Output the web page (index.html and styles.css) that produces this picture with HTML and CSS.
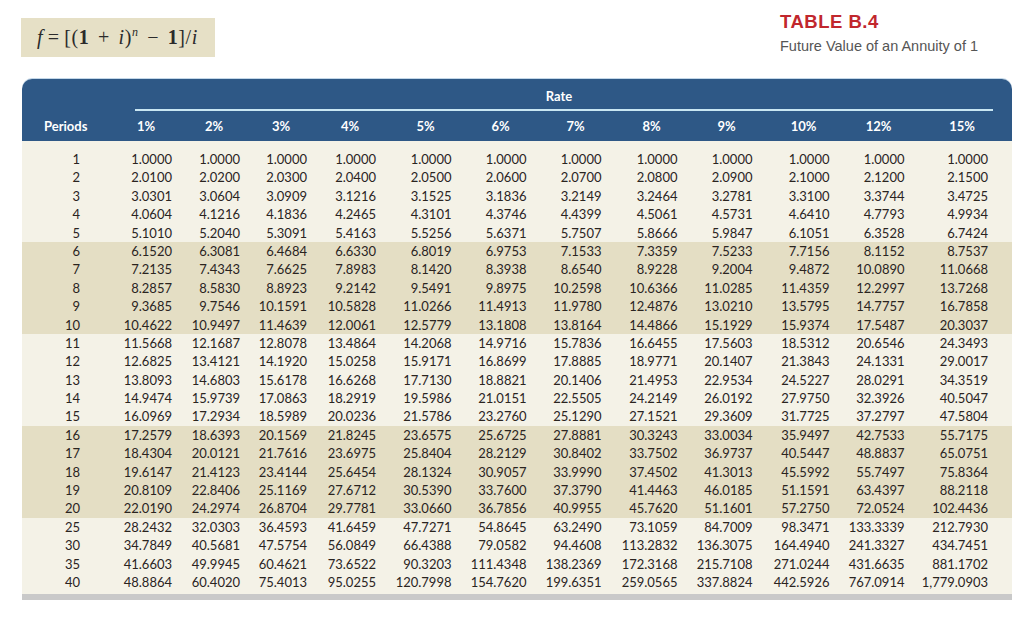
FILE: index.html
```html
<!DOCTYPE html>
<html lang="en">
<head>
<meta charset="utf-8">
<title>Table B.4 Future Value of an Annuity of 1</title>
<link rel="stylesheet" href="styles.css">
</head>
<body>
<div class="page">
  <div class="top">
    <div class="formula"><i>f</i>&#8201;=&#8201;[(<b>1</b> + <i>i</i>)<sup><i>n</i></sup> − <b>1</b>]/<i>i</i></div>
    <div class="title">
      <div class="title-main">TABLE B.4</div>
      <div class="title-sub">Future Value of an Annuity of 1</div>
    </div>
  </div>

  <div class="table">
    <div class="thead">
      <div class="rate-band"><span class="rate-label">Rate</span></div>
      <div class="row head-row">
        <div class="pcell">Periods</div>
        <div class="hcell"><span>1%</span></div>
        <div class="hcell"><span>2%</span></div>
        <div class="hcell"><span>3%</span></div>
        <div class="hcell"><span>4%</span></div>
        <div class="hcell"><span>5%</span></div>
        <div class="hcell"><span>6%</span></div>
        <div class="hcell"><span>7%</span></div>
        <div class="hcell"><span>8%</span></div>
        <div class="hcell"><span>9%</span></div>
        <div class="hcell"><span>10%</span></div>
        <div class="hcell"><span>12%</span></div>
        <div class="hcell"><span>15%</span></div>
      </div>
    </div>

    <div class="band light first">
      <div class="row"><div class="n">1</div><div>1.0000</div><div>1.0000</div><div>1.0000</div><div>1.0000</div><div>1.0000</div><div>1.0000</div><div>1.0000</div><div>1.0000</div><div>1.0000</div><div>1.0000</div><div>1.0000</div><div>1.0000</div></div>
      <div class="row"><div class="n">2</div><div>2.0100</div><div>2.0200</div><div>2.0300</div><div>2.0400</div><div>2.0500</div><div>2.0600</div><div>2.0700</div><div>2.0800</div><div>2.0900</div><div>2.1000</div><div>2.1200</div><div>2.1500</div></div>
      <div class="row"><div class="n">3</div><div>3.0301</div><div>3.0604</div><div>3.0909</div><div>3.1216</div><div>3.1525</div><div>3.1836</div><div>3.2149</div><div>3.2464</div><div>3.2781</div><div>3.3100</div><div>3.3744</div><div>3.4725</div></div>
      <div class="row"><div class="n">4</div><div>4.0604</div><div>4.1216</div><div>4.1836</div><div>4.2465</div><div>4.3101</div><div>4.3746</div><div>4.4399</div><div>4.5061</div><div>4.5731</div><div>4.6410</div><div>4.7793</div><div>4.9934</div></div>
      <div class="row"><div class="n">5</div><div>5.1010</div><div>5.2040</div><div>5.3091</div><div>5.4163</div><div>5.5256</div><div>5.6371</div><div>5.7507</div><div>5.8666</div><div>5.9847</div><div>6.1051</div><div>6.3528</div><div>6.7424</div></div>
    </div>
    <div class="band dark">
      <div class="row"><div class="n">6</div><div>6.1520</div><div>6.3081</div><div>6.4684</div><div>6.6330</div><div>6.8019</div><div>6.9753</div><div>7.1533</div><div>7.3359</div><div>7.5233</div><div>7.7156</div><div>8.1152</div><div>8.7537</div></div>
      <div class="row"><div class="n">7</div><div>7.2135</div><div>7.4343</div><div>7.6625</div><div>7.8983</div><div>8.1420</div><div>8.3938</div><div>8.6540</div><div>8.9228</div><div>9.2004</div><div>9.4872</div><div>10.0890</div><div>11.0668</div></div>
      <div class="row"><div class="n">8</div><div>8.2857</div><div>8.5830</div><div>8.8923</div><div>9.2142</div><div>9.5491</div><div>9.8975</div><div>10.2598</div><div>10.6366</div><div>11.0285</div><div>11.4359</div><div>12.2997</div><div>13.7268</div></div>
      <div class="row"><div class="n">9</div><div>9.3685</div><div>9.7546</div><div>10.1591</div><div>10.5828</div><div>11.0266</div><div>11.4913</div><div>11.9780</div><div>12.4876</div><div>13.0210</div><div>13.5795</div><div>14.7757</div><div>16.7858</div></div>
      <div class="row"><div class="n">10</div><div>10.4622</div><div>10.9497</div><div>11.4639</div><div>12.0061</div><div>12.5779</div><div>13.1808</div><div>13.8164</div><div>14.4866</div><div>15.1929</div><div>15.9374</div><div>17.5487</div><div>20.3037</div></div>
    </div>
    <div class="band light">
      <div class="row"><div class="n">11</div><div>11.5668</div><div>12.1687</div><div>12.8078</div><div>13.4864</div><div>14.2068</div><div>14.9716</div><div>15.7836</div><div>16.6455</div><div>17.5603</div><div>18.5312</div><div>20.6546</div><div>24.3493</div></div>
      <div class="row"><div class="n">12</div><div>12.6825</div><div>13.4121</div><div>14.1920</div><div>15.0258</div><div>15.9171</div><div>16.8699</div><div>17.8885</div><div>18.9771</div><div>20.1407</div><div>21.3843</div><div>24.1331</div><div>29.0017</div></div>
      <div class="row"><div class="n">13</div><div>13.8093</div><div>14.6803</div><div>15.6178</div><div>16.6268</div><div>17.7130</div><div>18.8821</div><div>20.1406</div><div>21.4953</div><div>22.9534</div><div>24.5227</div><div>28.0291</div><div>34.3519</div></div>
      <div class="row"><div class="n">14</div><div>14.9474</div><div>15.9739</div><div>17.0863</div><div>18.2919</div><div>19.5986</div><div>21.0151</div><div>22.5505</div><div>24.2149</div><div>26.0192</div><div>27.9750</div><div>32.3926</div><div>40.5047</div></div>
      <div class="row"><div class="n">15</div><div>16.0969</div><div>17.2934</div><div>18.5989</div><div>20.0236</div><div>21.5786</div><div>23.2760</div><div>25.1290</div><div>27.1521</div><div>29.3609</div><div>31.7725</div><div>37.2797</div><div>47.5804</div></div>
    </div>
    <div class="band dark">
      <div class="row"><div class="n">16</div><div>17.2579</div><div>18.6393</div><div>20.1569</div><div>21.8245</div><div>23.6575</div><div>25.6725</div><div>27.8881</div><div>30.3243</div><div>33.0034</div><div>35.9497</div><div>42.7533</div><div>55.7175</div></div>
      <div class="row"><div class="n">17</div><div>18.4304</div><div>20.0121</div><div>21.7616</div><div>23.6975</div><div>25.8404</div><div>28.2129</div><div>30.8402</div><div>33.7502</div><div>36.9737</div><div>40.5447</div><div>48.8837</div><div>65.0751</div></div>
      <div class="row"><div class="n">18</div><div>19.6147</div><div>21.4123</div><div>23.4144</div><div>25.6454</div><div>28.1324</div><div>30.9057</div><div>33.9990</div><div>37.4502</div><div>41.3013</div><div>45.5992</div><div>55.7497</div><div>75.8364</div></div>
      <div class="row"><div class="n">19</div><div>20.8109</div><div>22.8406</div><div>25.1169</div><div>27.6712</div><div>30.5390</div><div>33.7600</div><div>37.3790</div><div>41.4463</div><div>46.0185</div><div>51.1591</div><div>63.4397</div><div>88.2118</div></div>
      <div class="row"><div class="n">20</div><div>22.0190</div><div>24.2974</div><div>26.8704</div><div>29.7781</div><div>33.0660</div><div>36.7856</div><div>40.9955</div><div>45.7620</div><div>51.1601</div><div>57.2750</div><div>72.0524</div><div>102.4436</div></div>
    </div>
    <div class="band light last">
      <div class="row"><div class="n">25</div><div>28.2432</div><div>32.0303</div><div>36.4593</div><div>41.6459</div><div>47.7271</div><div>54.8645</div><div>63.2490</div><div>73.1059</div><div>84.7009</div><div>98.3471</div><div>133.3339</div><div>212.7930</div></div>
      <div class="row"><div class="n">30</div><div>34.7849</div><div>40.5681</div><div>47.5754</div><div>56.0849</div><div>66.4388</div><div>79.0582</div><div>94.4608</div><div>113.2832</div><div>136.3075</div><div>164.4940</div><div>241.3327</div><div>434.7451</div></div>
      <div class="row"><div class="n">35</div><div>41.6603</div><div>49.9945</div><div>60.4621</div><div>73.6522</div><div>90.3203</div><div>111.4348</div><div>138.2369</div><div>172.3168</div><div>215.7108</div><div>271.0244</div><div>431.6635</div><div>881.1702</div></div>
      <div class="row"><div class="n">40</div><div>48.8864</div><div>60.4020</div><div>75.4013</div><div>95.0255</div><div>120.7998</div><div>154.7620</div><div>199.6351</div><div>259.0565</div><div>337.8824</div><div>442.5926</div><div>767.0914</div><div>1,779.0903</div></div>
    </div>
    <div class="foot"></div>
  </div>
</div>
</body>
</html>
```

FILE: styles.css
```css
* { box-sizing: border-box; }
html, body { margin: 0; padding: 0; background: #ffffff; }
body { width: 1024px; height: 627px; overflow: hidden; font-family: "Lato", "Open Sans", sans-serif; }

.page { width: 1024px; }

.top {
  display: flex;
  height: 79px;
}

.formula {
  margin: 18px 0 0 21px;
  width: 194px;
  height: 39px;
  line-height: 39px;
  background: #e6e0c6;
  padding-left: 16px;
  font-family: "Liberation Serif", "DejaVu Serif", serif;
  font-size: 20px;
  letter-spacing: 0.6px;
  word-spacing: 3px;
  color: #2b2b2b;
  white-space: nowrap;
}
.formula sup { font-size: 12px; vertical-align: 8px; line-height: 0; }

.title {
  margin-left: auto;
  width: 244px;
  padding-top: 11px;
}
.title-main {
  font-family: "Liberation Sans", Arial, sans-serif;
  font-weight: 700;
  font-size: 18.5px;
  line-height: 22px;
  letter-spacing: 0.5px;
  color: #c1272d;
}
.title-sub {
  margin-top: 5px;
  font-family: "Liberation Sans", Arial, sans-serif;
  font-size: 14.5px;
  line-height: 17px;
  color: #555555;
}

.table {
  margin-left: 22px;
  width: 990px;
  box-shadow: 0 -1px 0 #c3d7e8;
  border-radius: 10px 10px 0 0;
}

.thead {
  background: #2e5886;
  border-radius: 10px 10px 0 0;
  color: #ffffff;
  font-weight: 700;
  font-size: 13px;
}

.rate-band {
  margin: 0 19px 0 113px;
  height: 32px;
  padding-top: 9px;
  line-height: 16px;
  border-bottom: 2px solid #c9e6f2;
  text-align: center;
}
.rate-label { padding-right: 10px; }

.row {
  display: grid;
  grid-template-columns: 78px 72px 68px 67px 69px 75.5px 75px 75px 76px 75px 77px 75px 83.5px;
  padding-right: 23.5px;
  height: 18.4px;
  line-height: 18.4px;
  font-size: 13px;
  color: #2a241f;
  white-space: nowrap;
}
.row > div { text-align: right; }
.row > .n { padding-right: 20px; }

.head-row {
  height: 30px;
  line-height: 30px;
  color: #ffffff;
  font-weight: 700;
}
.head-row > .pcell { text-align: left; padding-left: 22px; }
.head-row > .hcell span { display: inline-block; width: 52px; text-align: center; }

.band.light { background: #f4f2e7; }
.band.dark { background: #e4dec4; }
.band.first { padding-top: 9px; }
.band.last { padding-bottom: 3px; }

.foot {
  height: 6px;
  background: #c9c9c9;
}
```
